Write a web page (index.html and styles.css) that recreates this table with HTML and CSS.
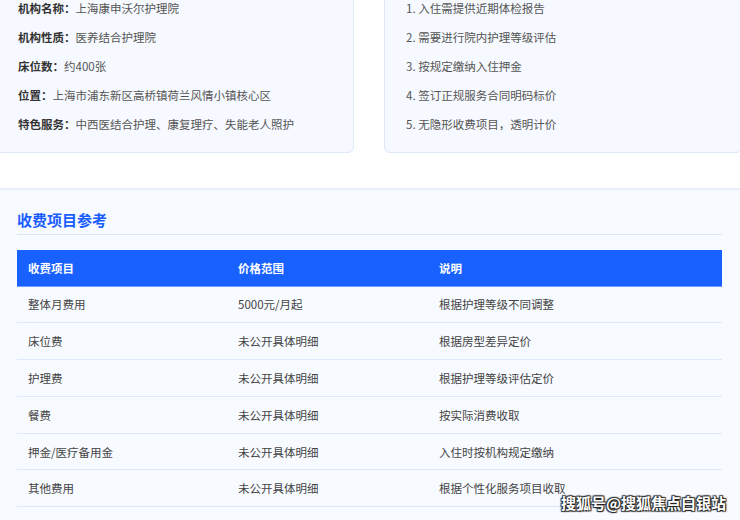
FILE: index.html
```html
<!DOCTYPE html>
<html lang="zh-CN">
<head>
<meta charset="utf-8">
<title>收费项目参考</title>
<link rel="stylesheet" href="styles.css">
</head>
<body>
<div class="page">
  <div class="cards">
    <div class="card">
      <p class="line"><span class="label">机构名称：</span>上海康申沃尔护理院</p>
      <p class="line"><span class="label">机构性质：</span>医养结合护理院</p>
      <p class="line"><span class="label">床位数：</span>约400张</p>
      <p class="line"><span class="label">位置：</span>上海市浦东新区高桥镇荷兰风情小镇核心区</p>
      <p class="line"><span class="label">特色服务：</span>中西医结合护理、康复理疗、失能老人照护</p>
    </div>
    <div class="card card-right">
      <p class="line">1. 入住需提供近期体检报告</p>
      <p class="line">2. 需要进行院内护理等级评估</p>
      <p class="line">3. 按规定缴纳入住押金</p>
      <p class="line">4. 签订正规服务合同明码标价</p>
      <p class="line">5. 无隐形收费项目，透明计价</p>
    </div>
  </div>

  <section class="fees">
    <h2 class="title">收费项目参考</h2>
    <table class="fee-table">
      <colgroup>
        <col class="c1"><col class="c2"><col class="c3">
      </colgroup>
      <thead>
        <tr><th>收费项目</th><th>价格范围</th><th>说明</th></tr>
      </thead>
      <tbody>
        <tr><td>整体月费用</td><td>5000元/月起</td><td>根据护理等级不同调整</td></tr>
        <tr><td>床位费</td><td>未公开具体明细</td><td>根据房型差异定价</td></tr>
        <tr><td>护理费</td><td>未公开具体明细</td><td>根据护理等级评估定价</td></tr>
        <tr><td>餐费</td><td>未公开具体明细</td><td>按实际消费收取</td></tr>
        <tr><td>押金/医疗备用金</td><td>未公开具体明细</td><td>入住时按机构规定缴纳</td></tr>
        <tr><td>其他费用</td><td>未公开具体明细</td><td>根据个性化服务项目收取</td></tr>
      </tbody>
    </table>
  </section>
  <div class="watermark">搜狐号@搜狐焦点白银站</div>
</div>
</body>
</html>
```

FILE: styles.css
```css
* { box-sizing: border-box; }
html, body {
  margin: 0;
  padding: 0;
  background: #ffffff;
  overflow: hidden;
}
body {
  font-family: "Noto Sans CJK SC", "Noto Sans", sans-serif;
  font-size: 11.5px;
  color: #555;
}
.page {
  position: relative;
  width: 740px;
  height: 520px;
  overflow: hidden;
}
.cards {
  display: grid;
  grid-template-columns: 358px 358px;
  column-gap: 30px;
  width: 746px;
  margin: -22px 0 0 -4px;
}
.card {
  background: #f6f9ff;
  border: 1px solid #dfe8f6;
  border-radius: 6px;
  padding: 19px 21px 18px;
}
.line {
  margin: 0 0 9px;
  line-height: 20px;
  color: #555;
  white-space: nowrap;
}
.line:last-child { margin-bottom: 0; }
.label {
  font-weight: 700;
  color: #333;
}
.fees {
  margin-top: 35px;
  background: #f7faff;
  border-top: 2px solid #e6eefb;
  padding: 19px 18px 40px 17px;
}
.title {
  margin: 0;
  font-size: 15px;
  line-height: 22px;
  font-weight: 700;
  color: #1a5dff;
  padding-bottom: 3px;
  border-bottom: 1px solid #dbe5f4;
}
.fee-table {
  margin-top: 15px;
  width: 705px;
  border-collapse: collapse;
  table-layout: fixed;
}
.c1 { width: 210px; }
.c2 { width: 201px; }
.c3 { width: 294px; }
.fee-table th {
  background: #1961ff;
  color: #fff;
  font-weight: 700;
  text-align: left;
  height: 36px;
  padding: 0 11px;
  border-bottom: 1px solid #6e9dff;
}
.fee-table td {
  height: 36.8px;
  padding: 0 11px;
  color: #444;
  border-bottom: 1px solid #dde8f8;
  white-space: nowrap;
}
.watermark {
  position: absolute;
  left: 561px;
  top: 492px;
  font-size: 15px;
  line-height: 22px;
  font-weight: 700;
  color: #ffffff;
  text-shadow: 0 0 1px #222, 1px 1px 1px #222, -1px -1px 1px #333, 1px -1px 1px #333, -1px 1px 1px #333;
}
```
